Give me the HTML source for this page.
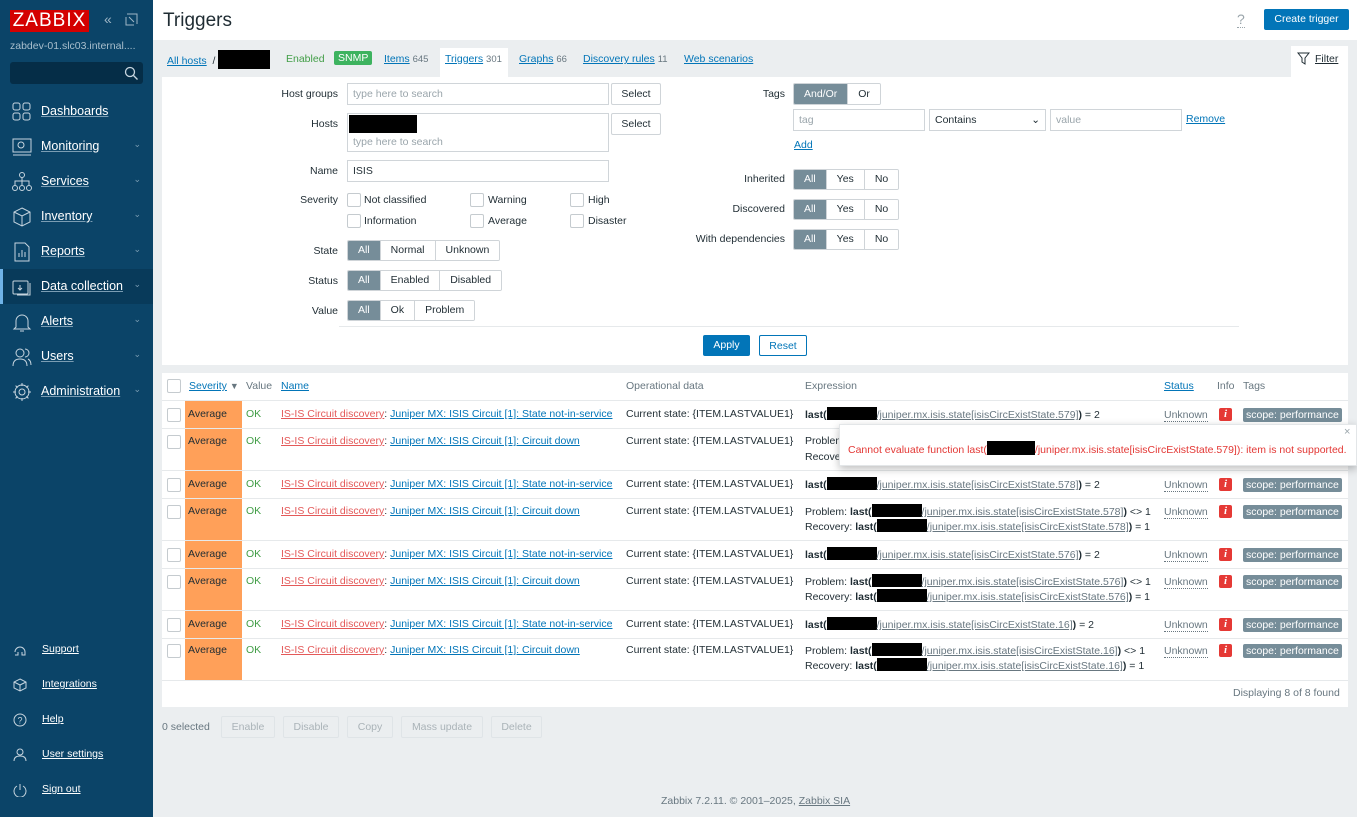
<!DOCTYPE html>
<html><head><meta charset="utf-8"><style>
*{box-sizing:border-box;margin:0;padding:0}
body{width:1357px;height:817px;overflow:hidden;background:#ebeef0;font-family:"Liberation Sans",Arial,sans-serif;font-size:10.5px;color:#1f2c33;position:relative}
.a{position:absolute}
#sb{left:0;top:0;width:153px;height:817px;background:#0b4468;color:#fff}
.logo{left:10px;top:10px;width:79px;height:22px;background:#d40000;color:#fff;font-size:19px;letter-spacing:1px;line-height:22px;text-align:center}
.nav{left:0;width:153px;height:35px;font-size:12.5px;color:#fff}
.nav span{position:absolute;left:41px;top:10px;text-decoration:underline;text-decoration-color:#7b9db3}
.nav i{position:absolute;right:12px;top:10px;font-style:normal;color:#7b9db3;font-size:9px}
.nav svg{position:absolute;left:11px;top:7px}
.bot{left:0;font-size:10.5px}
.bot span{position:absolute;left:42px;text-decoration:underline;white-space:nowrap}
u,.lk{color:#0275b8;text-decoration:underline}
.inp{background:#fff;border:1px solid #d0d5d9;height:22px;padding:4px 5px;color:#9aa5ab}
.btn{background:#fff;border:1px solid #cfd4d8;height:22px;text-align:center;line-height:20px;color:#1f2c33;border-radius:2px}
.seg{display:flex;height:21px;border:1px solid #cfd4d8;border-radius:2px;overflow:hidden}
.seg div{padding:0 10px;line-height:19px;border-left:1px solid #cfd4d8;background:#fff}
.seg div:first-child{border:0;background:#768d99;color:#fff}
.lbl{text-align:right;width:120px}
.cb{width:14px;height:14px;border:1px solid #c5cbcf;background:#fff;border-radius:2px}
.row{left:162px;width:1186px;border-top:1px solid #e6e9eb;background:#fff}
.sev{position:absolute;left:23px;top:0;width:57px;bottom:0;background:#ffa059;padding:7px 3px;}
.t{position:absolute;white-space:nowrap}
.red{color:#e45959;text-decoration:underline}
.blk{display:inline-block;background:#000;height:13px;vertical-align:-2px}
.gl{color:#687780;text-decoration:underline}
.info{position:absolute;left:1057px;width:13px;height:13px;background:#e53935;color:#fff;font-style:italic;font-weight:bold;font-family:"Liberation Serif",serif;text-align:center;line-height:13px;font-size:11px;border-radius:2px}
.tag{position:absolute;left:1081px;background:#768d99;color:#fff;padding:0 3px;height:14px;line-height:14px;border-radius:2px;white-space:nowrap}
.unk{position:absolute;left:1002px;color:#687780;border-bottom:1px dotted #687780;line-height:12px}
.fb{background:#ebeef0;border:1px solid #dfe4e7;color:#aab3b8;height:22px;line-height:20px;text-align:center;border-radius:2px}
</style></head><body>
<div id="sb" class="a">
<div class="a logo">ZABBIX</div>
<div class="a" style="left:104px;top:11px;color:#9fb6c6;font-size:14px">«</div>
<svg class="a" style="left:125px;top:13px" width="13" height="13"><path d="M2 1h10v10M1 4v8h8M4 4l5 5" stroke="#9fb6c6" fill="none"/></svg>
<div class="a" style="left:10px;top:40px;color:#a9bfcd;font-size:10.5px">zabdev-01.slc03.internal....</div>
<div class="a" style="left:10px;top:62px;width:133px;height:22px;background:#052d47;border-radius:3px"></div>
<svg class="a" style="left:124px;top:66px" width="14" height="14"><circle cx="6" cy="6" r="4.5" stroke="#c7d5df" fill="none" stroke-width="1.3"/><path d="M9.5 9.5l4 4" stroke="#c7d5df" stroke-width="1.3"/></svg>
<div class="a nav" style="top:94px"><svg width="22" height="22"><g stroke="#c7d5df" fill="none"><rect x="2" y="2" width="7" height="7" rx="2"/><rect x="12" y="2" width="7" height="7" rx="2"/><rect x="2" y="12" width="7" height="7" rx="2"/><rect x="12" y="12" width="7" height="7" rx="2"/></g></svg><span>Dashboards</span></div>
<div class="a nav" style="top:129px"><svg width="22" height="22"><g stroke="#c7d5df" fill="none"><rect x="2" y="3" width="18" height="13"/><circle cx="10" cy="9" r="3"/><path d="M2 19h18"/></g></svg><span>Monitoring</span><i>⌄</i></div>
<div class="a nav" style="top:164px"><svg width="22" height="22"><g stroke="#c7d5df" fill="none"><circle cx="11" cy="4" r="2.5"/><circle cx="4" cy="17" r="2.5"/><circle cx="11" cy="17" r="2.5"/><circle cx="18" cy="17" r="2.5"/><path d="M11 7v7M4 14v-4h14v4"/></g></svg><span>Services</span><i>⌄</i></div>
<div class="a nav" style="top:199px"><svg width="22" height="22"><g stroke="#c7d5df" fill="none"><path d="M11 2l8 4v10l-8 4-8-4V6zM3 6l8 4 8-4M11 10v10"/></g></svg><span>Inventory</span><i>⌄</i></div>
<div class="a nav" style="top:234px"><svg width="22" height="22"><g stroke="#c7d5df" fill="none"><path d="M4 2h10l4 4v14H4zM8 16v-4M11 16v-7M14 16v-5"/></g></svg><span>Reports</span><i>⌄</i></div>
<div class="a nav" style="top:269px;background:#083a5a"><div class="a" style="left:0;top:0;width:3px;height:35px;background:#6fb3e8"></div><svg width="22" height="22"><g stroke="#c7d5df" fill="none"><rect x="2" y="5" width="15" height="13" rx="1"/><path d="M19 7v12H6M9 9v5M7 12l2 2 2-2"/></g></svg><span>Data collection</span><i>⌄</i></div>
<div class="a nav" style="top:304px"><svg width="22" height="22"><g stroke="#c7d5df" fill="none"><path d="M5 16V10a6 6 0 0112 0v6l2 2H3zM9 20h4"/></g></svg><span>Alerts</span><i>⌄</i></div>
<div class="a nav" style="top:339px"><svg width="22" height="22"><g stroke="#c7d5df" fill="none"><circle cx="9" cy="7" r="4"/><path d="M2 20c0-5 3-7 7-7s7 2 7 7M14 3a4 4 0 010 8M17 13c2 1 3 3 3 6"/></g></svg><span>Users</span><i>⌄</i></div>
<div class="a nav" style="top:374px"><svg width="22" height="22"><g stroke="#c7d5df" fill="none"><circle cx="11" cy="11" r="3"/><path d="M11 2v3M11 17v3M2 11h3M17 11h3M4.6 4.6l2 2M15.4 15.4l2 2M4.6 17.4l2-2M15.4 6.6l2-2"/><circle cx="11" cy="11" r="7"/></g></svg><span>Administration</span><i>⌄</i></div>
<div class="a bot" style="top:643px"><svg class="a" style="left:13px" width="14" height="14"><path d="M2 9a5 5 0 0110 0v3H9V9M5 9v3H2" stroke="#c7d5df" fill="none"/></svg><span>Support</span></div>
<div class="a bot" style="top:678px"><svg class="a" style="left:13px" width="14" height="14"><path d="M7 1l6 3v6l-6 3-6-3V4zM7 7l6-3M7 7L1 4M7 7v6" stroke="#c7d5df" fill="none"/></svg><span>Integrations</span></div>
<div class="a bot" style="top:713px"><svg class="a" style="left:13px" width="14" height="14"><circle cx="7" cy="7" r="6" stroke="#c7d5df" fill="none"/><text x="4.5" y="10.5" fill="#c7d5df" font-size="9">?</text></svg><span>Help</span></div>
<div class="a bot" style="top:748px"><svg class="a" style="left:13px" width="14" height="14"><circle cx="7" cy="4" r="3" stroke="#c7d5df" fill="none"/><path d="M1 13c0-4 3-5 6-5s6 1 6 5" stroke="#c7d5df" fill="none"/></svg><span>User settings</span></div>
<div class="a bot" style="top:783px"><svg class="a" style="left:13px" width="14" height="14"><path d="M4 3a6 6 0 106 0M7 1v6" stroke="#c7d5df" fill="none"/></svg><span>Sign out</span></div>
</div>

<div class="a" style="left:153px;top:0;width:1204px;height:40px;background:#fff"></div>
<div class="a" style="left:163px;top:10px;font-size:19px">Triggers</div>
<div class="a" style="left:1237px;top:11px;color:#9aa5ab;font-size:14px;border-bottom:1px dotted #9aa5ab">?</div>
<div class="a" style="left:1264px;top:9px;width:85px;height:21px;background:#0275b8;color:#fff;text-align:center;line-height:21px;border-radius:2px">Create trigger</div>

<div class="a" style="left:167px;top:50px;white-space:nowrap"><u>All hosts</u> &nbsp;/ <span class="blk" style="width:52px;height:19px;vertical-align:-5px"></span></div>
<div class="a" style="left:286px;top:53px;color:#429e47">Enabled</div>
<div class="a" style="left:334px;top:51px;background:#3db35f;color:#fff;padding:1px 4px;font-size:10.5px;border-radius:2px">SNMP</div>
<div class="a" style="left:384px;top:53px;white-space:nowrap"><u>Items</u> <span style="color:#687780;font-size:9.5px">645</span></div>
<div class="a" style="left:440px;top:48px;width:68px;height:30px;background:#fff"></div>
<div class="a" style="left:445px;top:53px;white-space:nowrap"><u>Triggers</u> <span style="color:#687780;font-size:9.5px">301</span></div>
<div class="a" style="left:519px;top:53px;white-space:nowrap"><u>Graphs</u> <span style="color:#687780;font-size:9.5px">66</span></div>
<div class="a" style="left:583px;top:53px;white-space:nowrap"><u>Discovery rules</u> <span style="color:#687780;font-size:9.5px">11</span></div>
<div class="a" style="left:684px;top:53px"><u>Web scenarios</u></div>
<div class="a" style="left:1291px;top:46px;width:57px;height:32px;background:#fff"></div>
<svg class="a" style="left:1297px;top:52px" width="13" height="13"><path d="M1 1h11L8 6v6l-3-2V6z" stroke="#1f2c33" fill="none"/></svg>
<div class="a" style="left:1315px;top:53px;text-decoration:underline">Filter</div>

<div class="a" style="left:162px;top:77px;width:1186px;height:288px;background:#fff"></div>
<div class="a lbl" style="left:218px;top:88px">Host groups</div>
<div class="a inp" style="left:347px;top:83px;width:262px">type here to search</div>
<div class="a btn" style="left:611px;top:83px;width:50px">Select</div>
<div class="a lbl" style="left:218px;top:118px">Hosts</div>
<div class="a inp" style="left:347px;top:113px;width:262px;height:39px;padding-top:22px">type here to search</div>
<div class="a" style="left:349px;top:115px;width:68px;height:18px;background:#000"></div>
<div class="a btn" style="left:611px;top:113px;width:50px">Select</div>
<div class="a lbl" style="left:218px;top:165px">Name</div>
<div class="a inp" style="left:347px;top:160px;width:262px;color:#1f2c33">ISIS</div>
<div class="a lbl" style="left:218px;top:194px">Severity</div>
<div class="a cb" style="left:347px;top:193px"></div><div class="a" style="left:364px;top:194px">Not classified</div>
<div class="a cb" style="left:470px;top:193px"></div><div class="a" style="left:488px;top:194px">Warning</div>
<div class="a cb" style="left:570px;top:193px"></div><div class="a" style="left:588px;top:194px">High</div>
<div class="a cb" style="left:347px;top:214px"></div><div class="a" style="left:364px;top:215px">Information</div>
<div class="a cb" style="left:470px;top:214px"></div><div class="a" style="left:488px;top:215px">Average</div>
<div class="a cb" style="left:570px;top:214px"></div><div class="a" style="left:588px;top:215px">Disaster</div>
<div class="a lbl" style="left:218px;top:245px">State</div>
<div class="a seg" style="left:347px;top:240px"><div>All</div><div>Normal</div><div>Unknown</div></div>
<div class="a lbl" style="left:218px;top:275px">Status</div>
<div class="a seg" style="left:347px;top:270px"><div>All</div><div>Enabled</div><div>Disabled</div></div>
<div class="a lbl" style="left:218px;top:305px">Value</div>
<div class="a seg" style="left:347px;top:300px"><div>All</div><div>Ok</div><div>Problem</div></div>

<div class="a lbl" style="left:665px;top:88px">Tags</div>
<div class="a seg" style="left:793px;top:83px;height:22px"><div style="padding:0 10px;line-height:20px">And/Or</div><div style="padding:0 10px;line-height:20px">Or</div></div>
<div class="a inp" style="left:793px;top:109px;width:132px">tag</div>
<div class="a inp" style="left:929px;top:109px;width:117px;color:#1f2c33">Contains<span style="float:right">⌄</span></div>
<div class="a inp" style="left:1050px;top:109px;width:132px">value</div>
<div class="a lk" style="left:1186px;top:113px">Remove</div>
<div class="a lk" style="left:794px;top:139px">Add</div>
<div class="a lbl" style="left:665px;top:173px">Inherited</div>
<div class="a seg" style="left:793px;top:169px"><div>All</div><div>Yes</div><div>No</div></div>
<div class="a lbl" style="left:665px;top:203px">Discovered</div>
<div class="a seg" style="left:793px;top:199px"><div>All</div><div>Yes</div><div>No</div></div>
<div class="a lbl" style="left:665px;top:233px">With dependencies</div>
<div class="a seg" style="left:793px;top:229px"><div>All</div><div>Yes</div><div>No</div></div>
<div class="a" style="left:339px;top:326px;width:900px;border-top:1px solid #e6e9eb"></div>
<div class="a" style="left:703px;top:335px;width:47px;height:21px;background:#0275b8;color:#fff;text-align:center;line-height:21px;border-radius:2px">Apply</div>
<div class="a btn" style="left:759px;top:335px;width:48px;height:21px;color:#0275b8;border-color:#0275b8">Reset</div>

<div class="a" style="left:162px;top:373px;width:1186px;height:334px;background:#fff"></div>
<div class="a cb" style="left:167px;top:379px"></div>
<div class="a" style="left:189px;top:380px"><u>Severity</u> <span style="color:#687780;font-size:9px">▼</span></div>
<div class="a" style="left:246px;top:380px;color:#687780">Value</div>
<div class="a" style="left:281px;top:380px"><u>Name</u></div>
<div class="a" style="left:626px;top:380px;color:#687780">Operational data</div>
<div class="a" style="left:805px;top:380px;color:#687780">Expression</div>
<div class="a" style="left:1164px;top:380px"><u>Status</u></div>
<div class="a" style="left:1217px;top:380px;color:#687780">Info</div>
<div class="a" style="left:1243px;top:380px;color:#687780">Tags</div>

<div class="a row" style="top:400px;height:28px"><div class="cb a" style="left:5px;top:7px"></div><div class="sev">Average</div><div class="t" style="left:84px;top:7px;color:#429e47">OK</div><div class="t" style="left:119px;top:7px"><span class="red">IS-IS Circuit discovery</span>: <u>Juniper MX: ISIS Circuit [1]: State not-in-service</u></div><div class="t" style="left:464px;top:7px">Current state: {ITEM.LASTVALUE1}</div><div class="t" style="left:643px;top:6px"><b>last(</b><span class="blk" style="width:50px"></span><span class="gl">/juniper.mx.isis.state[isisCircExistState.579]</span><b>)</b> = 2</div><div class="unk" style="top:8px">Unknown</div><div class="info" style="top:7px">i</div><div class="tag" style="top:7px">scope: performance</div></div>
<div class="a row" style="top:428px;height:42px"><div class="cb a" style="left:5px;top:6px"></div><div class="sev" style="padding-top:6px">Average</div><div class="t" style="left:84px;top:6px;color:#429e47">OK</div><div class="t" style="left:119px;top:6px"><span class="red">IS-IS Circuit discovery</span>: <u>Juniper MX: ISIS Circuit [1]: Circuit down</u></div><div class="t" style="left:464px;top:6px">Current state: {ITEM.LASTVALUE1}</div><div class="t" style="left:643px;top:6px">Problem</div><div class="t" style="left:643px;top:22px">Recove</div></div>
<div class="a row" style="top:470px;height:28px"><div class="cb a" style="left:5px;top:7px"></div><div class="sev">Average</div><div class="t" style="left:84px;top:7px;color:#429e47">OK</div><div class="t" style="left:119px;top:7px"><span class="red">IS-IS Circuit discovery</span>: <u>Juniper MX: ISIS Circuit [1]: State not-in-service</u></div><div class="t" style="left:464px;top:7px">Current state: {ITEM.LASTVALUE1}</div><div class="t" style="left:643px;top:6px"><b>last(</b><span class="blk" style="width:50px"></span><span class="gl">/juniper.mx.isis.state[isisCircExistState.578]</span><b>)</b> = 2</div><div class="unk" style="top:8px">Unknown</div><div class="info" style="top:7px">i</div><div class="tag" style="top:7px">scope: performance</div></div>
<div class="a row" style="top:498px;height:42px"><div class="cb a" style="left:5px;top:6px"></div><div class="sev" style="padding-top:6px">Average</div><div class="t" style="left:84px;top:6px;color:#429e47">OK</div><div class="t" style="left:119px;top:6px"><span class="red">IS-IS Circuit discovery</span>: <u>Juniper MX: ISIS Circuit [1]: Circuit down</u></div><div class="t" style="left:464px;top:6px">Current state: {ITEM.LASTVALUE1}</div><div class="t" style="left:643px;top:5px">Problem: <b>last(</b><span class="blk" style="width:50px"></span><span class="gl">/juniper.mx.isis.state[isisCircExistState.578]</span><b>)</b> &lt;&gt; 1</div><div class="t" style="left:643px;top:20px">Recovery: <b>last(</b><span class="blk" style="width:50px"></span><span class="gl">/juniper.mx.isis.state[isisCircExistState.578]</span><b>)</b> = 1</div><div class="unk" style="top:7px">Unknown</div><div class="info" style="top:6px">i</div><div class="tag" style="top:6px">scope: performance</div></div>
<div class="a row" style="top:540px;height:28px"><div class="cb a" style="left:5px;top:7px"></div><div class="sev">Average</div><div class="t" style="left:84px;top:7px;color:#429e47">OK</div><div class="t" style="left:119px;top:7px"><span class="red">IS-IS Circuit discovery</span>: <u>Juniper MX: ISIS Circuit [1]: State not-in-service</u></div><div class="t" style="left:464px;top:7px">Current state: {ITEM.LASTVALUE1}</div><div class="t" style="left:643px;top:6px"><b>last(</b><span class="blk" style="width:50px"></span><span class="gl">/juniper.mx.isis.state[isisCircExistState.576]</span><b>)</b> = 2</div><div class="unk" style="top:8px">Unknown</div><div class="info" style="top:7px">i</div><div class="tag" style="top:7px">scope: performance</div></div>
<div class="a row" style="top:568px;height:42px"><div class="cb a" style="left:5px;top:6px"></div><div class="sev" style="padding-top:6px">Average</div><div class="t" style="left:84px;top:6px;color:#429e47">OK</div><div class="t" style="left:119px;top:6px"><span class="red">IS-IS Circuit discovery</span>: <u>Juniper MX: ISIS Circuit [1]: Circuit down</u></div><div class="t" style="left:464px;top:6px">Current state: {ITEM.LASTVALUE1}</div><div class="t" style="left:643px;top:5px">Problem: <b>last(</b><span class="blk" style="width:50px"></span><span class="gl">/juniper.mx.isis.state[isisCircExistState.576]</span><b>)</b> &lt;&gt; 1</div><div class="t" style="left:643px;top:20px">Recovery: <b>last(</b><span class="blk" style="width:50px"></span><span class="gl">/juniper.mx.isis.state[isisCircExistState.576]</span><b>)</b> = 1</div><div class="unk" style="top:7px">Unknown</div><div class="info" style="top:6px">i</div><div class="tag" style="top:6px">scope: performance</div></div>
<div class="a row" style="top:610px;height:28px"><div class="cb a" style="left:5px;top:7px"></div><div class="sev">Average</div><div class="t" style="left:84px;top:7px;color:#429e47">OK</div><div class="t" style="left:119px;top:7px"><span class="red">IS-IS Circuit discovery</span>: <u>Juniper MX: ISIS Circuit [1]: State not-in-service</u></div><div class="t" style="left:464px;top:7px">Current state: {ITEM.LASTVALUE1}</div><div class="t" style="left:643px;top:6px"><b>last(</b><span class="blk" style="width:50px"></span><span class="gl">/juniper.mx.isis.state[isisCircExistState.16]</span><b>)</b> = 2</div><div class="unk" style="top:8px">Unknown</div><div class="info" style="top:7px">i</div><div class="tag" style="top:7px">scope: performance</div></div>
<div class="a row" style="top:638px;height:42px"><div class="cb a" style="left:5px;top:5px"></div><div class="sev" style="padding-top:5px">Average</div><div class="t" style="left:84px;top:5px;color:#429e47">OK</div><div class="t" style="left:119px;top:5px"><span class="red">IS-IS Circuit discovery</span>: <u>Juniper MX: ISIS Circuit [1]: Circuit down</u></div><div class="t" style="left:464px;top:5px">Current state: {ITEM.LASTVALUE1}</div><div class="t" style="left:643px;top:4px">Problem: <b>last(</b><span class="blk" style="width:50px"></span><span class="gl">/juniper.mx.isis.state[isisCircExistState.16]</span><b>)</b> &lt;&gt; 1</div><div class="t" style="left:643px;top:19px">Recovery: <b>last(</b><span class="blk" style="width:50px"></span><span class="gl">/juniper.mx.isis.state[isisCircExistState.16]</span><b>)</b> = 1</div><div class="unk" style="top:6px">Unknown</div><div class="info" style="top:5px">i</div><div class="tag" style="top:5px">scope: performance</div></div>
<div class="a" style="left:162px;top:680px;width:1186px;border-top:1px solid #e6e9eb"></div>
<div class="a" style="left:1233px;top:687px;color:#687780">Displaying 8 of 8 found</div>

<div class="a" style="left:839px;top:424px;width:518px;height:42px;background:#fff;box-shadow:0 3px 8px rgba(0,0,0,.25);border:1px solid #e3e6e8"></div>
<div class="a" style="left:1344px;top:426px;color:#9aa5ab;font-size:11px">×</div>
<div class="a" style="left:848px;top:441px;color:#e33734;white-space:nowrap">Cannot evaluate function last(<span class="blk" style="width:48px;height:14px"></span>/juniper.mx.isis.state[isisCircExistState.579]): item is not supported.</div>

<div class="a" style="left:162px;top:721px;color:#687780">0 selected</div>
<div class="a fb" style="left:221px;top:716px;width:54px">Enable</div>
<div class="a fb" style="left:283px;top:716px;width:56px">Disable</div>
<div class="a fb" style="left:347px;top:716px;width:46px">Copy</div>
<div class="a fb" style="left:401px;top:716px;width:82px">Mass update</div>
<div class="a fb" style="left:491px;top:716px;width:51px">Delete</div>
<div class="a" style="left:661px;top:795px;color:#687780;font-size:10.5px">Zabbix 7.2.11. © 2001–2025, <span style="text-decoration:underline">Zabbix SIA</span></div>
</body></html>
